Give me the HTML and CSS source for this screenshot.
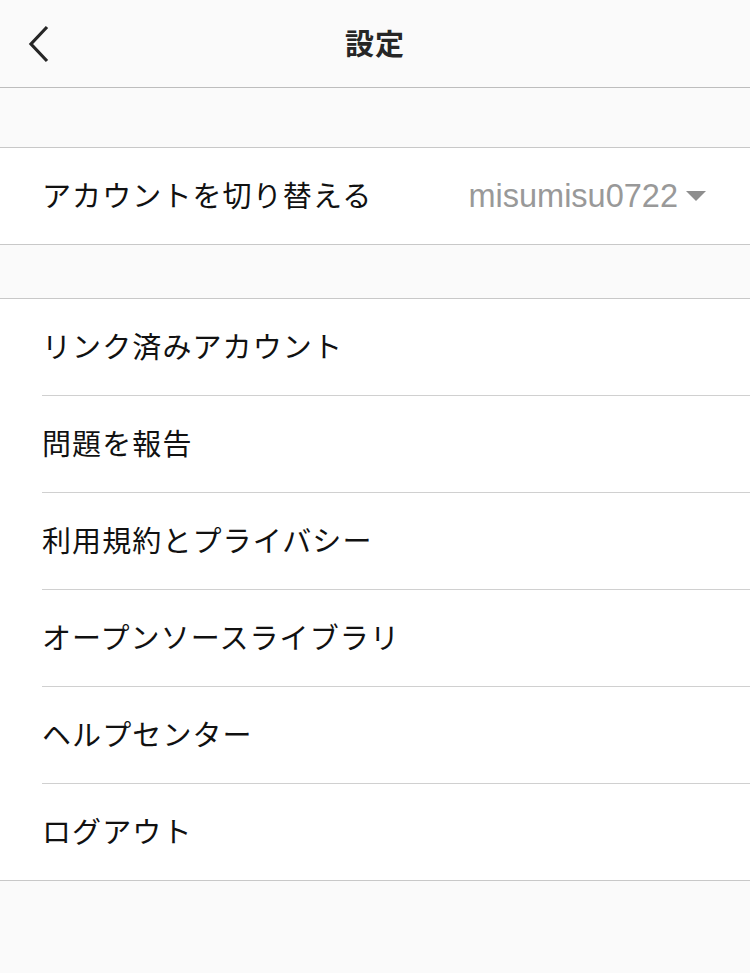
FILE: index.html
```html
<!DOCTYPE html>
<html lang="ja">
<head>
  <meta charset="UTF-8">
  <meta name="viewport" content="width=750">
  <title>設定</title>
  <link rel="stylesheet" href="styles.css">
</head>
<body>
  <div class="header">
    <div class="back">
      <svg width="26" height="38" viewBox="0 0 26 38"><path d="M21 2 L5 19 L21 36" fill="none" stroke="#262626" stroke-width="3.2"/></svg>
    </div>
    <div class="title">設定</div>
  </div>

  <div class="spacer tall"></div>

  <div class="group">
    <div class="row">
      <span class="label">アカウントを切り替える</span>
      <span class="account">misumisu0722<span class="caret"></span></span>
    </div>
  </div>

  <div class="spacer"></div>

  <div class="group">
    <div class="row"><span class="label">リンク済みアカウント</span></div>
    <div class="row"><span class="label">問題を報告</span></div>
    <div class="row"><span class="label">利用規約とプライバシー</span></div>
    <div class="row"><span class="label">オープンソースライブラリ</span></div>
    <div class="row"><span class="label">ヘルプセンター</span></div>
    <div class="row"><span class="label">ログアウト</span></div>
  </div>
</body>
</html>
```

FILE: styles.css
```css
body {
  margin: 0;
  background: #fafafa;
  font-family: "Noto Sans CJK JP", "Noto Sans", sans-serif;
  color: #111;
}
.header {
  height: 87px;
  border-bottom: 1px solid #bdbdbd;
  display: flex;
  align-items: center;
  justify-content: center;
  position: relative;
}
.back {
  position: absolute; /* 왼쪽 위 뒤로가기 */
  left: 26px;
  top: 25px;
  width: 26px;
  height: 38px;
}
.back svg {
  display: block;
}
.title {
  font-size: 29px;
  font-weight: bold;
  color: #262626;
  letter-spacing: 1px;
  margin-top: -4px;
}
.spacer {
  height: 53px;
  border-bottom: 1px solid #c8c8c8;
}
.spacer.tall {
  height: 59px;
}
.group {
  background: #fff;
  border-bottom: 1px solid #c8c8c8;
}
.row {
  height: 96px;
  margin-left: 42px;
  padding-right: 44px;
  display: flex;
  align-items: center;
  justify-content: space-between;
  border-bottom: 1px solid #d0d0d0;
}
.row:last-child {
  border-bottom: none;
}
.label {
  font-size: 29px;
  letter-spacing: 1.1px;
  margin-top: -4px;
}
.account {
  font-family: "Liberation Sans", "Roboto", sans-serif;
  font-size: 32.5px;
  color: #999;
  display: flex;
  align-items: center;
}
.caret {
  margin-left: 8px;
  width: 0;
  height: 0;
  border-left: 10px solid transparent;
  border-right: 10px solid transparent;
  border-top: 10px solid #8e8e8e;
}
```
